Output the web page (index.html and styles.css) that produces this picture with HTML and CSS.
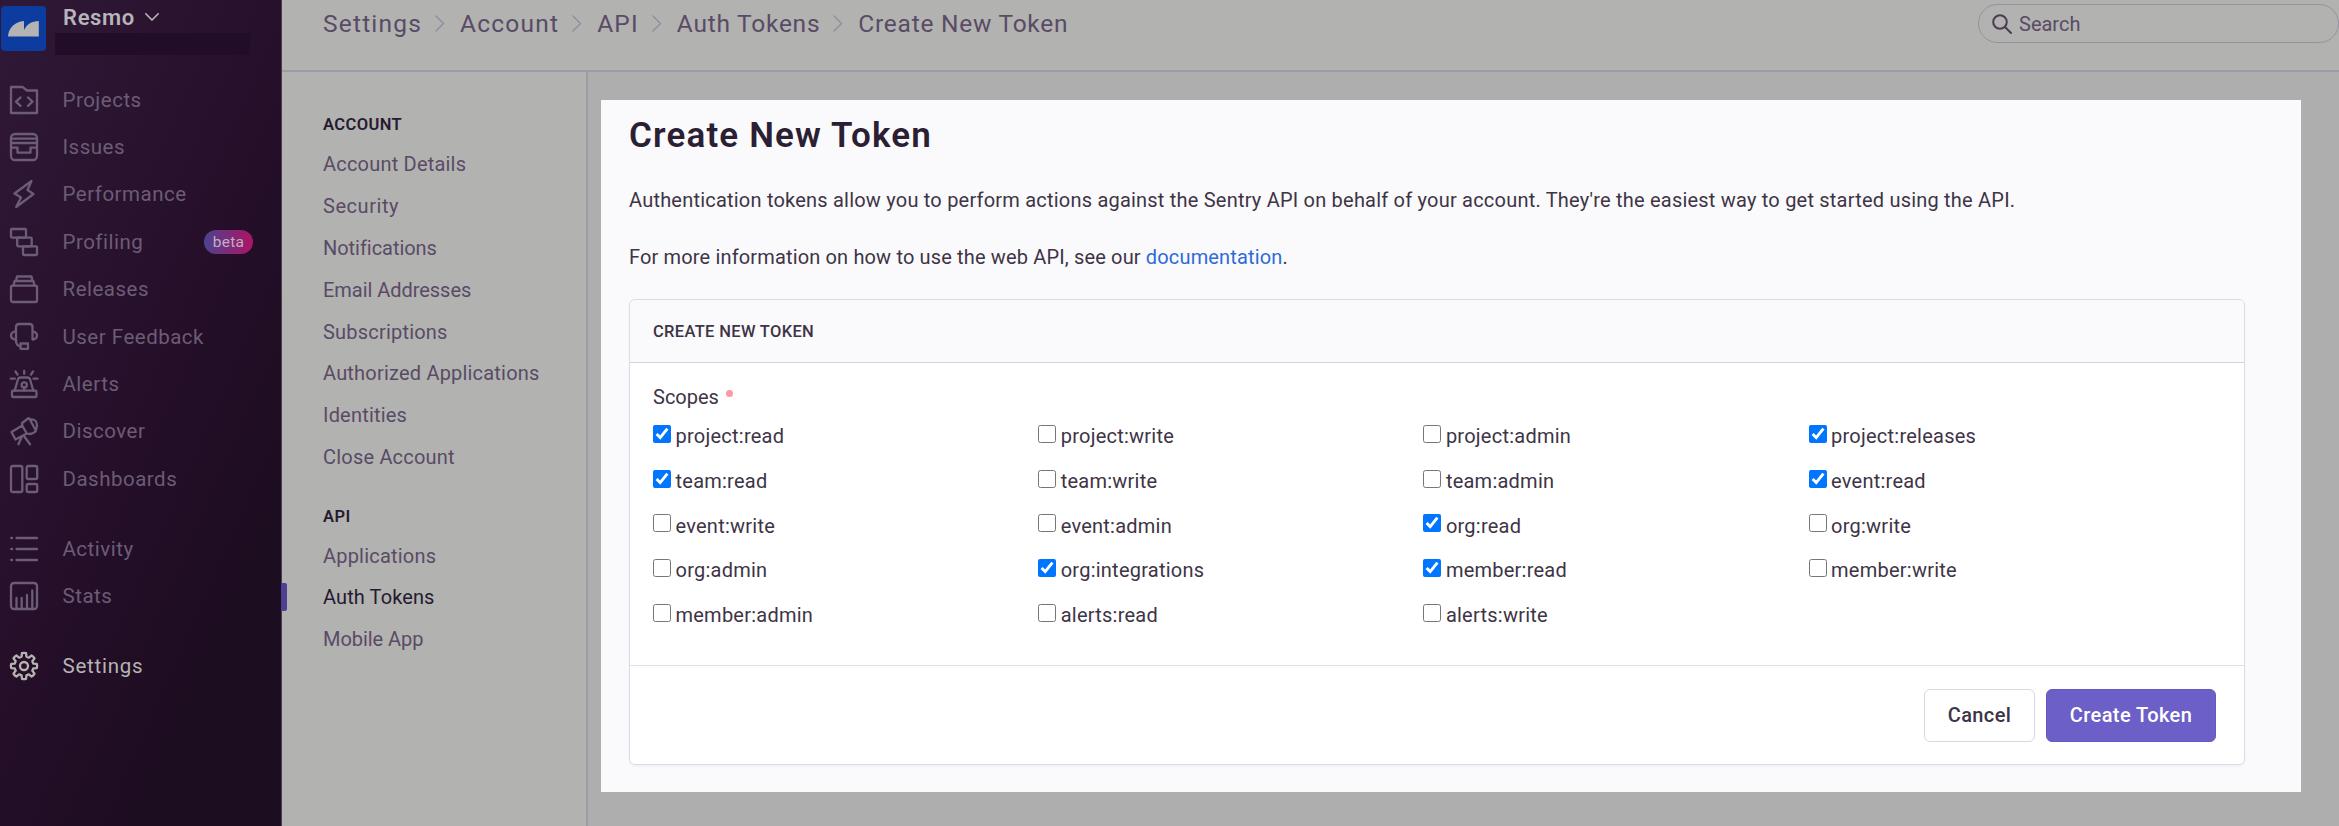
FILE: index.html
```html
<!DOCTYPE html>
<html lang="en">
<head>
<meta charset="utf-8">
<title>Create New Token</title>
<link rel="stylesheet" href="styles.css">
</head>
<body>
<div class="app">
  <aside class="sidebar">
    <div class="org">
      <svg class="org-logo" viewBox="0 0 45 45"><rect width="45" height="45" rx="4" fill="#0c3c9f"/><path d="M7 30.5C7.500 22 14 15.500 23 15V24C26 18 31 15.200 37.800 15V30.500z" fill="#b4b4b4"/></svg>
      <div class="org-text">
        <div class="org-name"><span>Resmo</span><svg class="org-caret" viewBox="0 0 14 8"><path d="M.8.8 7 7 13.200.8"/></svg></div>
        <div class="org-user"></div>
      </div>
    </div>
    <nav class="menu">
      <a class="item"><svg class="ico" viewBox="0 0 28 28"><path d="M1 1h11.500l4.500 3.500h10V27H1z"/><path d="M10.500 11.500 6 15.700l4.500 4.200M18 11.500l4.500 4.200L18 19.900"/></svg><span>Projects</span></a>
      <a class="item"><svg class="ico" viewBox="0 0 28 28"><rect x="1" y="1" width="26" height="26" rx="4"/><path d="M1 5.600h26M1 10h26M1 14.700h6.500v5h13v-5H27"/></svg><span>Issues</span></a>
      <a class="item"><svg class="ico" viewBox="0 0 28 28"><path d="M21.500 1 4.500 13.500l6.500 4L6.200 27l17.300-13-6-4z"/></svg><span>Performance</span></a>
      <a class="item"><svg class="ico" viewBox="0 0 28 28"><rect x="1" y="1" width="15" height="8.600" rx="1"/><rect x="7.200" y="9.600" width="14.500" height="8.700" rx="1"/><rect x="13" y="18.300" width="14" height="8.700" rx="1"/></svg><span>Profiling</span><b class="beta">beta</b></a>
      <a class="item"><svg class="ico" viewBox="0 0 28 28"><rect x="1" y="10.700" width="26" height="16.300" rx="1.500"/><path d="M3.500 10.700 4.600 6h18.800l1.100 4.700M6 6l1-4.500h14.500l1 4.500"/></svg><span>Releases</span></a>
      <a class="item"><svg class="ico" viewBox="0 0 28 28"><path d="M6 16V4q0-3 3-3h10.500q3 0 3 3v12M6 8.500H4.500Q1 9.500 1 12.500t3.500 4H6q0 7 4.500 6.700M22.500 8.500h1Q27 9.500 27 12.500t-3.500 4h-1"/><rect x="10.500" y="20.500" width="7.500" height="5.300"/></svg><span>User Feedback</span></a>
      <a class="item"><svg class="ico" viewBox="0 0 28 28"><rect x="2" y="20.700" width="24.500" height="6.300" rx="1"/><path d="M4.700 20.700 7.900 9.500Q8.500 7.500 10.500 7.500h7q2 0 2.600 2l3.200 11.200M14.200 17.500v3M14.200.8v3M5.500 1.500l2 3M23 1.500l-2 3M.8 8.700h4M23.500 8.700h4"/><circle cx="14.200" cy="15" r="2.600"/></svg><span>Alerts</span></a>
      <a class="item"><svg class="ico" viewBox="0 0 28 28"><path d="M1.500 15 12.200 8.500l4.600 8L5.500 22.500zM12.200 6 18 1.500q1-.5 1.500.3L26 14q-3 3-7 3l-2.200-.5M12.200 6v2.500M20.500 2.500q6.500-.5 6.500 6-.2 3-1.500 5M11.800 19.500 8.500 27.200M14 19l6 8.200"/></svg><span>Discover</span></a>
      <a class="item"><svg class="ico" viewBox="0 0 28 28"><rect x="1" y="1" width="11.300" height="26" rx="1.500"/><rect x="16.700" y="1" width="10.500" height="13" rx="1.500"/><rect x="16.700" y="19" width="10.500" height="8" rx="1.500"/></svg><span>Dashboards</span></a>
      <a class="item spaced"><svg class="ico" viewBox="0 0 28 28"><path d="M1.300 3h.8M6.500 3H27M1.300 14h.8M6.500 14H27M1.300 25h.8M6.500 25H27"/></svg><span>Activity</span></a>
      <a class="item"><svg class="ico" viewBox="0 0 28 28"><rect x="1" y="1" width="26" height="26" rx="3"/><path d="M6.500 27V16M11.700 27V16M17 27V13M22.300 27V8.500"/></svg><span>Stats</span></a>
      <a class="item spaced current"><svg class="ico" viewBox="0 0 28 28"><path d="M11.970 1.160Q14 .6 16.030 1.160L16.480 4.730 18.800 5.690 21.640 3.480Q23.500 4.500 24.520 6.360L22.310 9.200 23.270 11.520 26.840 11.970Q27.400 14 26.840 16.030L23.270 16.480 22.310 18.800 24.520 21.640Q23.500 23.500 21.640 24.520L18.800 22.310 16.480 23.270 16.030 26.840Q14 27.400 11.970 26.840L11.520 23.270 9.200 22.310 6.360 24.520Q4.500 23.500 3.480 21.640L5.690 18.800 4.730 16.480 1.160 16.030Q.6 14 1.160 11.970L4.730 11.520 5.690 9.200 3.480 6.360Q4.500 4.500 6.360 3.480L9.200 5.690 11.520 4.730z"/><circle cx="14" cy="14" r="4"/></svg><span>Settings</span></a>
    </nav>
  </aside>

  <div class="content">
    <header class="topbar">
      <div class="crumbs">
        <span>Settings</span><svg class="sep" viewBox="0 0 10 17"><path d="M1 1l7.500 7.500L1 16"/></svg>
        <span>Account</span><svg class="sep" viewBox="0 0 10 17"><path d="M1 1l7.500 7.500L1 16"/></svg>
        <span>API</span><svg class="sep" viewBox="0 0 10 17"><path d="M1 1l7.500 7.500L1 16"/></svg>
        <span class="long">Auth Tokens</span><svg class="sep" viewBox="0 0 10 17"><path d="M1 1l7.500 7.500L1 16"/></svg>
        <span class="long">Create New Token</span>
      </div>
      <div class="search"><svg class="search-ico" viewBox="0 0 20 20"><circle cx="8" cy="8" r="6.800"/><path d="M13 13l6 6"/></svg><span>Search</span></div>
    </header>
    <div class="columns">
      <nav class="subnav">
        <h6>ACCOUNT</h6>
        <a>Account Details</a>
        <a class="wide">Security</a>
        <a class="snug">Notifications</a>
        <a class="snug">Email Addresses</a>
        <a>Subscriptions</a>
        <a>Authorized Applications</a>
        <a>Identities</a>
        <a>Close Account</a>
        <h6 class="second">API</h6>
        <a>Applications</a>
        <a class="active">Auth Tokens</a>
        <a class="snug">Mobile App</a>
      </nav>
      <main class="stage">
        <section class="panel">
          <h1>Create New Token</h1>
          <p>Authentication tokens allow you to perform actions against the Sentry API on behalf of your account. They're the easiest way to get started using the API.</p>
          <p class="more"><span>For more information on how to use the web API, see our <a class="link">documentation</a>.</span></p>
          <form class="card">
            <div class="card-head">CREATE NEW TOKEN</div>
            <div class="card-body">
              <div class="field-label">Scopes<i class="required"></i></div>
              <div class="scopes">
                <label><input type="checkbox" checked>project:read</label>
                <label><input type="checkbox">project:write</label>
                <label><input type="checkbox">project:admin</label>
                <label><input type="checkbox" checked>project:releases</label>
                <label><input type="checkbox" checked>team:read</label>
                <label><input type="checkbox">team:write</label>
                <label><input type="checkbox">team:admin</label>
                <label><input type="checkbox" checked>event:read</label>
                <label><input type="checkbox">event:write</label>
                <label><input type="checkbox">event:admin</label>
                <label><input type="checkbox" checked>org:read</label>
                <label><input type="checkbox">org:write</label>
                <label><input type="checkbox">org:admin</label>
                <label><input type="checkbox" checked>org:integrations</label>
                <label><input type="checkbox" checked>member:read</label>
                <label><input type="checkbox">member:write</label>
                <label><input type="checkbox">member:admin</label>
                <label><input type="checkbox">alerts:read</label>
                <label><input type="checkbox">alerts:write</label>
              </div>
            </div>
            <div class="card-foot"><button type="button" class="btn">Cancel</button><button type="button" class="btn primary">Create Token</button></div>
          </form>
        </section>
      </main>
    </div>
  </div>
</div>
</body>
</html>
```
FILE: styles.css
```css
* { box-sizing: border-box; }
body { margin: 0; font-family: Roboto, "Liberation Sans", sans-serif; font-size: 20px; overflow: hidden; }
.app { display: flex; width: 2339px; height: 826px; overflow: hidden; background: #b2b2b0; }
svg { fill: none; flex: none; display: block; }

.sidebar { width: 282px; flex: none; background: linear-gradient(294deg, #1c0d20 18%, #240e28 48%, #2f1836 96%); border-right: 1px solid #4a3b50; color: #6c5c77; }
.org { display: flex; gap: 9px; height: 76px; padding: 6px 0 0 1px; }
.org-logo { width: 45px; height: 45px; }
.org-name { display: flex; align-items: center; gap: 10px; height: 22px; padding-left: 8px; font-size: 22px; font-weight: 600; letter-spacing: .65px; color: #b8b4b9; }
.org-caret { width: 14px; height: 8px; stroke: #b8b4b9; stroke-width: 1.6; stroke-linecap: round; }
.org-user { width: 195px; height: 22px; margin-top: 5px; background: #210d28; }
.item { display: flex; align-items: center; height: 47.4px; padding-left: 9.5px; font-size: 20.5px; letter-spacing: .5px; }
.item span { margin-left: 25px; }
.ico { width: 28px; height: 28px; stroke: currentColor; stroke-width: 2.3; stroke-linecap: round; stroke-linejoin: round; overflow: visible; }
.spaced { margin-top: 22.4px; }
.current { color: #b6b4b2; letter-spacing: .75px; }
.item .beta { margin: 0 28px 0 auto; width: 49px; height: 24px; border-radius: 12px; line-height: 24px; text-align: center; font-size: 15.5px; font-weight: 400; letter-spacing: .3px; color: #c0b0c0; background: linear-gradient(90deg, #4c4290, #ad1464); }

.content { flex: 1; min-width: 0; display: flex; flex-direction: column; }
.topbar { height: 72px; flex: none; display: flex; justify-content: space-between; align-items: flex-start; border-bottom: 2px solid #9d9ca4; padding-left: 41px; }
.crumbs { display: flex; align-items: center; height: 47px; font-size: 24.5px; letter-spacing: 1.2px; color: #594b66; }
.crumbs .long { letter-spacing: .75px; }
.sep { width: 10px; height: 17px; margin: 0 15px 0 13px; stroke: #94909f; stroke-width: 1.5; stroke-linecap: round; }
.search { display: flex; align-items: center; width: 361px; height: 39px; margin-top: 4px; padding-left: 13px; border: 1.5px solid #96939f; border-radius: 20px; color: #594b66; }
.search-ico { width: 20px; height: 20px; margin-right: 7px; stroke: #4a3a58; stroke-width: 2; stroke-linecap: round; }

.columns { flex: 1; display: flex; min-height: 0; }
.subnav { width: 306px; flex: none; padding: 34px 0 0 41px; border-right: 2px solid #9d9ca4; color: #594b66; letter-spacing: .2px; }
.subnav h6 { display: flex; align-items: center; height: 37.6px; margin: 0; font-size: 16.5px; font-weight: 600; letter-spacing: .4px; color: #261a30; }
.subnav .second { margin-top: 20.8px; height: 36px; }
.subnav a { display: flex; align-items: center; height: 41.8px; position: relative; }
.subnav .wide { letter-spacing: .55px; }
.subnav .snug { letter-spacing: -.04px; }
.subnav .active { color: #261a30; letter-spacing: .1px; }
.subnav .active::before { content: ""; position: absolute; left: -42px; top: 6px; width: 6px; height: 28px; border-radius: 0 2px 2px 0; background: #4f4094; }

.stage { flex: 1; padding: 28px 38px 34px 13px; background: #aeaeaf; }
.panel { height: 692px; padding: 0 56px 0 28px; background: #fafafc; color: #3e3446; }
h1 { display: flex; align-items: center; height: 71px; margin: 0; font-size: 35px; font-weight: 600; letter-spacing: 1.15px; color: #2b2033; }
p { display: flex; align-items: center; height: 57.6px; margin: 0; white-space: nowrap; letter-spacing: .21px; }
.more { letter-spacing: .15px; }
.link { color: #2f6ad8; }
.card { margin-top: 12.8px; height: 466px; background: #fff; border: 1.5px solid #dfd8e6; border-radius: 6px; box-shadow: 0 2px 2px rgba(43, 34, 51, .04); display: flex; flex-direction: column; }
.card-head { display: flex; align-items: center; height: 63.5px; padding-left: 23px; background: #fafafc; border-bottom: 1.5px solid #d8d2e0; border-radius: 6px 6px 0 0; font-size: 16.5px; font-weight: 500; letter-spacing: .33px; }
.card-body { flex: 1; padding: 20.5px 23px 0; }
.field-label { display: flex; align-items: center; height: 27px; }
.required { width: 7px; height: 7px; margin: -8px 0 0 7px; border-radius: 50%; background: #fb9a9e; }
.scopes { display: grid; grid-template-columns: repeat(4, 385.2px); grid-auto-rows: 44.7px; margin-top: 3px; letter-spacing: .24px; }
.scopes label { display: flex; align-items: center; }
.scopes input { width: 18px; height: 18px; margin: -5px 4.5px 0 0; }
.card-foot { display: flex; justify-content: flex-end; gap: 11px; height: 99px; padding: 23px 28px 0 0; border-top: 1.5px solid #e3deea; }
.btn { width: 111px; height: 53px; padding: 0; border: 1.5px solid #dcd5e4; border-radius: 6px; background: #fff; color: #3e3446; font: 500 20px Roboto, sans-serif; letter-spacing: .4px; }
.primary { width: 170px; background: #6c5fc7; border-color: #6759c2; color: #fff; }
```
